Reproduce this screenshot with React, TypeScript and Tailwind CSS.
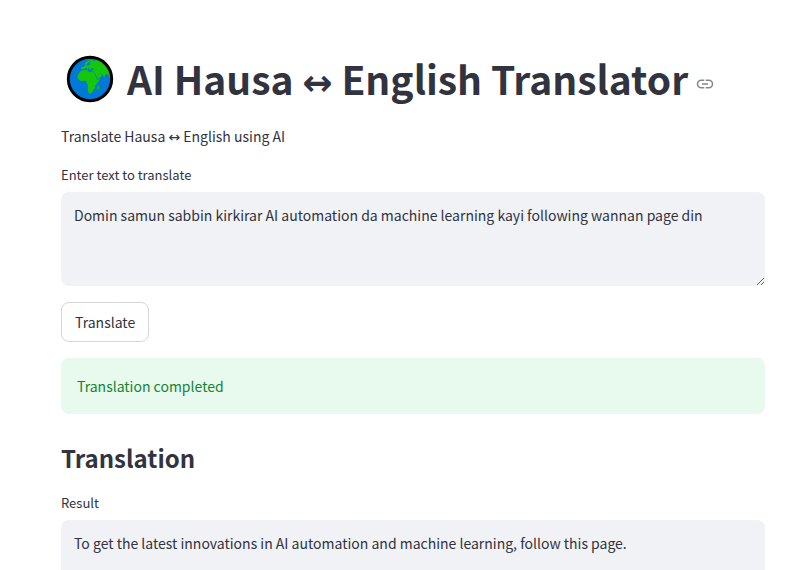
import { useState } from "react";

function Globe() {
    return (
        <svg viewBox="5 5 144 144" className="mt-px h-12 w-12 shrink-0" role="img" aria-label="Globe">
            <circle cx="77" cy="77" r="65" fill="#0078d7" />
            <g fill="#16c60c">
                <path d="M49 53L61 50L69 49L71 54L78 57L81 54L90 57L94 68L99 79L107 78L99 89L92 97L93 104L87 109L84 117L76 121L73 118L70 106L71 96L67 88L65 82L50 83L41 77L39 68Z" />
                <path d="M50 48L51 41L58 41L60 37L66 34L70 37L76 34L78 28L73 25L69 31L62 35L61 30L70 22L82 19L91 24L96 16L112 20L128 35L139 57L140 73L136 75L133 66L127 62L122 65L120 73L115 65L105 59L113 67L102 77L95 67L91 57L82 52L89 47L81 44L79 50L73 43L69 48L65 43L59 48Z" />
                <path d="M99 101L105 96L104 107L99 110Z" />
            </g>
            <circle cx="77" cy="77" r="65" fill="none" stroke="#000" strokeWidth="9" />
        </svg>
    );
}

function LinkIcon() {
    return (
        <svg
            viewBox="0 0 24 24"
            className="h-[18px] w-[18px]"
            fill="none"
            stroke="currentColor"
            strokeWidth="2"
            aria-hidden
        >
            <path d="M11 17H7A5 5 0 0 1 7 7h4M13 7h4a5 5 0 0 1 0 10h-4M8 12h8" />
        </svg>
    );
}

const labelClass = "mt-4 mb-[6px] block text-[13px] leading-[22px]";

const fieldClass =
    "block h-[94px] w-full rounded-lg bg-[#f0f2f6] px-[13px] py-[11px] text-sm leading-6 outline-none focus:ring-1 focus:ring-[#ff4b4b]";

export default function App() {
    const [text, setText] = useState(
        "Domin samun sabbin kirkirar AI automation da machine learning kayi following wannan page din",
    );
    const [result, setResult] = useState(
        "To get the latest innovations in AI automation and machine learning, follow this page.",
    );

    return (
        <main className="h-screen overflow-hidden bg-white pt-[52px] pr-[22px] pl-[61px] font-['Noto_Sans_CJK_SC',sans-serif] text-sm text-[#31333f]">
            <h1 className="flex items-center pl-[5px] text-[39px] leading-[52px] font-bold whitespace-nowrap">
                <Globe />
                <span className="ml-[13px]">
                    AI Hausa <span className="font-['DejaVu_Sans',sans-serif] text-4xl leading-none">↔</span> English
                    Translator
                </span>
                <a href="#translator" aria-label="Link to heading" className="ml-2 pt-3 text-[#85868c]">
                    <LinkIcon />
                </a>
            </h1>
            <p className="mt-5 leading-6">
                Translate Hausa <span className="font-['DejaVu_Sans',sans-serif] text-sm leading-none">↔</span> English
                using AI
            </p>

            <label htmlFor="source" className={labelClass}>
                Enter text to translate
            </label>
            <textarea id="source" value={text} onChange={(e) => setText(e.target.value)} className={fieldClass} />

            <button type="button" className="mt-4 block h-10 rounded-lg border border-[#d6d6d9] px-[13px] leading-6">
                Translate
            </button>

            <div role="status" className="mt-4 rounded-lg bg-[#e8f9ee] p-4 leading-6 text-[#158237]">
                Translation completed
            </div>

            <h2 className="mt-[26px] text-2xl leading-9 font-bold">Translation</h2>

            <label htmlFor="result" className={labelClass}>
                Result
            </label>
            <textarea id="result" value={result} onChange={(e) => setResult(e.target.value)} className={fieldClass} />
        </main>
    );
}
